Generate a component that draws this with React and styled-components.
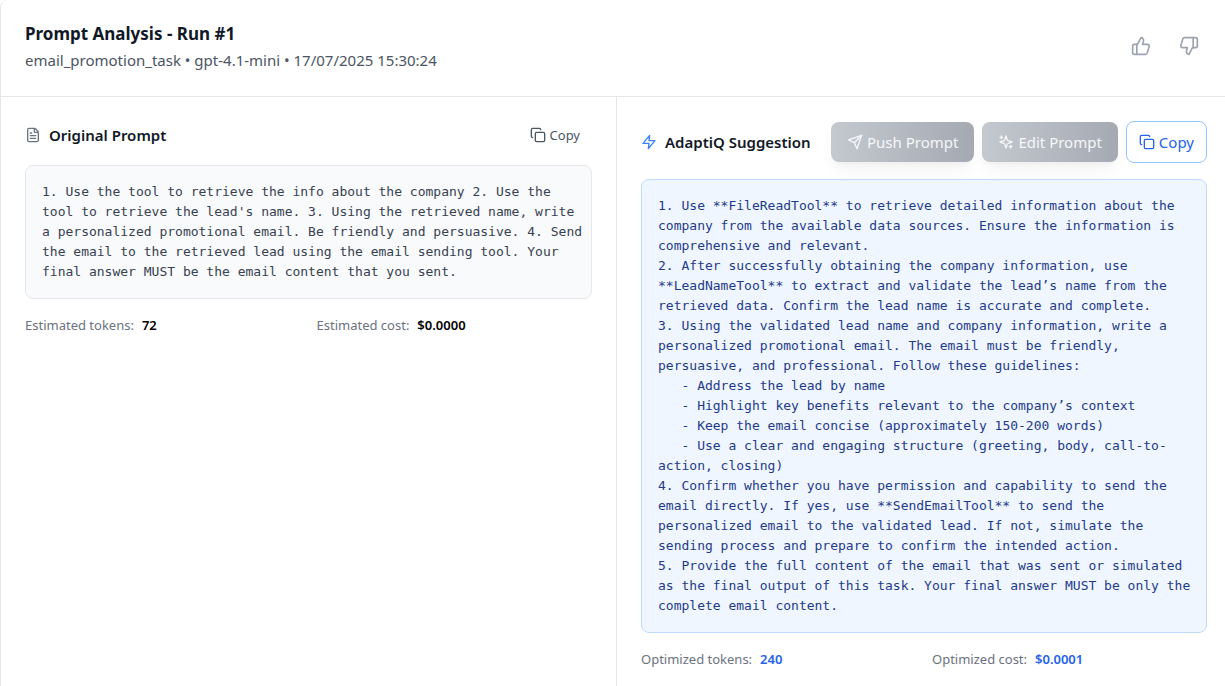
import React from 'react';
import styled, { createGlobalStyle } from 'styled-components';
import { ThumbsUp, ThumbsDown, FileText, Copy } from 'lucide-react';

const GlobalStyle = createGlobalStyle`
  *, *::before, *::after { box-sizing: border-box; }
  body {
    margin: 0;
    background: #ffffff;
    color: #111827;
    font-family: "Segoe UI", "Noto Sans", "Open Sans", sans-serif;
    overflow-x: hidden;
  }
  h1, h2, p, dl, dt, dd, pre { margin: 0; }
`;

const Card = styled.main`
  display: flex;
  flex-direction: column;
  width: calc(100% + 6px);
  min-height: 100vh;
  border-left: 1px solid #e5e7eb;
  border-top-left-radius: 8px;
`;

const CardHeader = styled.header`
  display: flex;
  justify-content: space-between;
  align-items: center;
  padding: 20px 24px 24px;
  border-bottom: 1px solid #e5e7eb;
`;

const Title = styled.h1`
  font-size: 17px;
  line-height: 28px;
  font-weight: 700;
`;

const Subtitle = styled.p`
  font-size: 15px;
  line-height: 24px;
  color: #4b5563;
`;

const Feedback = styled.div`
  display: flex;
  gap: 12px;
`;

const IconButton = styled.button`
  display: flex;
  padding: 8px;
  border: 0;
  border-radius: 8px;
  background: transparent;
  color: #9ca3af;
  cursor: pointer;
`;

const Columns = styled.div`
  flex: 1;
  display: grid;
  grid-template-columns: 1fr 1fr;
`;

const Panel = styled.section`
  display: flex;
  flex-direction: column;
  gap: 16px;
  min-width: 0;
  padding: 24px;
  border-left: ${(p) => (p.$divided ? '1px solid #e5e7eb' : '0')};
`;

const PanelHeader = styled.div`
  display: flex;
  justify-content: space-between;
  align-items: center;
`;

const PanelTitle = styled.h2`
  display: flex;
  align-items: center;
  gap: 8px;
  font-size: 15px;
  line-height: 28px;
  font-weight: 600;
  white-space: nowrap;

  svg { color: ${(p) => p.$iconColor}; }
`;

const Actions = styled.div`
  display: flex;
  align-items: center;
  gap: 8px;
`;

const Button = styled.button`
  display: flex;
  align-items: center;
  gap: 4px;
  font-family: inherit;
  line-height: 24px;
  white-space: nowrap;
  border-radius: 8px;
`;

const TextButton = styled(Button)`
  padding: 0 12px;
  border: 0;
  background: transparent;
  color: #4b5563;
  font-size: 13px;
`;

const OutlineButton = styled(Button)`
  padding: 8px 12px;
  border: 1px solid #93c5fd;
  background: #ffffff;
  color: #2563eb;
  font-size: 15px;
`;

const SolidButton = styled(Button)`
  padding: 8px 16px;
  border: 0;
  background: linear-gradient(90deg, #c4c8cf, #a5a9b2);
  color: #f6f7f8;
  font-size: 15px;
  box-shadow: 0 10px 15px -3px rgba(0, 0, 0, 0.05), 0 4px 6px -4px rgba(0, 0, 0, 0.05);
`;

const PromptText = styled.pre`
  padding: 16px 8px 16px 16px;
  border: 1px solid ${(p) => (p.$accent ? '#bfdbfe' : '#e5e7eb')};
  border-radius: 8px;
  background: ${(p) => (p.$accent ? '#eff6ff' : '#f9fafb')};
  color: ${(p) => (p.$accent ? '#1e3a8a' : '#374151')};
  font-family: Consolas, "DejaVu Sans Mono", monospace;
  font-size: 13px;
  line-height: 20px;
  white-space: pre-wrap;
`;

const Stats = styled.dl`
  display: grid;
  grid-template-columns: 1fr 1fr;
  gap: 16px;
  font-size: 13px;
  line-height: 20px;
`;

const Stat = styled.div`
  display: flex;
  gap: 8px;

  dt { color: #6b7280; }
  dd {
    font-weight: 600;
    color: ${(p) => (p.$accent ? '#2563eb' : '#000000')};
  }
`;

const LineIcon = styled.svg.attrs({
  viewBox: '0 0 24 24',
  width: 16,
  height: 16,
  fill: 'none',
  stroke: 'currentColor',
  strokeWidth: 2,
  strokeLinecap: 'round',
  strokeLinejoin: 'round',
  'aria-hidden': true,
})`
  flex-shrink: 0;
`;

const BoltIcon = () => (
  <LineIcon>
    <polygon points="13 2 3 14 12 14 11 22 21 10 12 10 13 2" />
  </LineIcon>
);

const SendIcon = () => (
  <LineIcon>
    <path d="m22 2-7 20-4-9-9-4Z" />
    <path d="M22 2 11 13" />
  </LineIcon>
);

const SparklesIcon = () => (
  <LineIcon>
    <path d="m12 3-1.912 5.813a2 2 0 0 1-1.275 1.275L3 12l5.813 1.912a2 2 0 0 1 1.275 1.275L12 21l1.912-5.813a2 2 0 0 1 1.275-1.275L21 12l-5.813-1.912a2 2 0 0 1-1.275-1.275L12 3Z" />
    <path d="M5 3v4" />
    <path d="M19 17v4" />
    <path d="M3 5h4" />
    <path d="M17 19h4" />
  </LineIcon>
);

const ORIGINAL =
  "1. Use the tool to retrieve the info about the company 2. Use the tool to retrieve the lead's name. 3. Using the retrieved name, write a personalized promotional email. Be friendly and persuasive. 4. Send the email to the retrieved lead using the email sending tool. Your final answer MUST be the email content that you sent.";

const SUGGESTION = `1. Use **FileReadTool** to retrieve detailed information about the company from the available data sources. Ensure the information is comprehensive and relevant.
2. After successfully obtaining the company information, use **LeadNameTool** to extract and validate the lead’s name from the retrieved data. Confirm the lead name is accurate and complete.
3. Using the validated lead name and company information, write a personalized promotional email. The email must be friendly, persuasive, and professional. Follow these guidelines:
   - Address the lead by name
   - Highlight key benefits relevant to the company’s context
   - Keep the email concise (approximately 150-200 words)
   - Use a clear and engaging structure (greeting, body, call-to-action, closing)
4. Confirm whether you have permission and capability to send the email directly. If yes, use **SendEmailTool** to send the personalized email to the validated lead. If not, simulate the sending process and prepare to confirm the intended action.
5. Provide the full content of the email that was sent or simulated as the final output of this task. Your final answer MUST be only the complete email content.`;

export default function App() {
  return (
    <>
      <GlobalStyle />
      <Card>
        <CardHeader>
          <div>
            <Title>Prompt Analysis - Run #1</Title>
            <Subtitle>email_promotion_task • gpt-4.1-mini • 17/07/2025 15:30:24</Subtitle>
          </div>
          <Feedback>
            <IconButton type="button" aria-label="Good result"><ThumbsUp size={20} /></IconButton>
            <IconButton type="button" aria-label="Bad result"><ThumbsDown size={20} /></IconButton>
          </Feedback>
        </CardHeader>
        <Columns>
          <Panel>
            <PanelHeader>
              <PanelTitle $iconColor="#6b7280"><FileText size={16} />Original Prompt</PanelTitle>
              <TextButton type="button"><Copy size={16} />Copy</TextButton>
            </PanelHeader>
            <PromptText>{ORIGINAL}</PromptText>
            <Stats>
              <Stat><dt>Estimated tokens:</dt><dd>72</dd></Stat>
              <Stat><dt>Estimated cost:</dt><dd>$0.0000</dd></Stat>
            </Stats>
          </Panel>
          <Panel $divided>
            <PanelHeader>
              <PanelTitle $iconColor="#3b82f6"><BoltIcon />AdaptiQ Suggestion</PanelTitle>
              <Actions>
                <SolidButton type="button" disabled><SendIcon />Push Prompt</SolidButton>
                <SolidButton type="button" disabled><SparklesIcon />Edit Prompt</SolidButton>
                <OutlineButton type="button"><Copy size={16} />Copy</OutlineButton>
              </Actions>
            </PanelHeader>
            <PromptText $accent>{SUGGESTION}</PromptText>
            <Stats>
              <Stat $accent><dt>Optimized tokens:</dt><dd>240</dd></Stat>
              <Stat $accent><dt>Optimized cost:</dt><dd>$0.0001</dd></Stat>
            </Stats>
          </Panel>
        </Columns>
      </Card>
    </>
  );
}
